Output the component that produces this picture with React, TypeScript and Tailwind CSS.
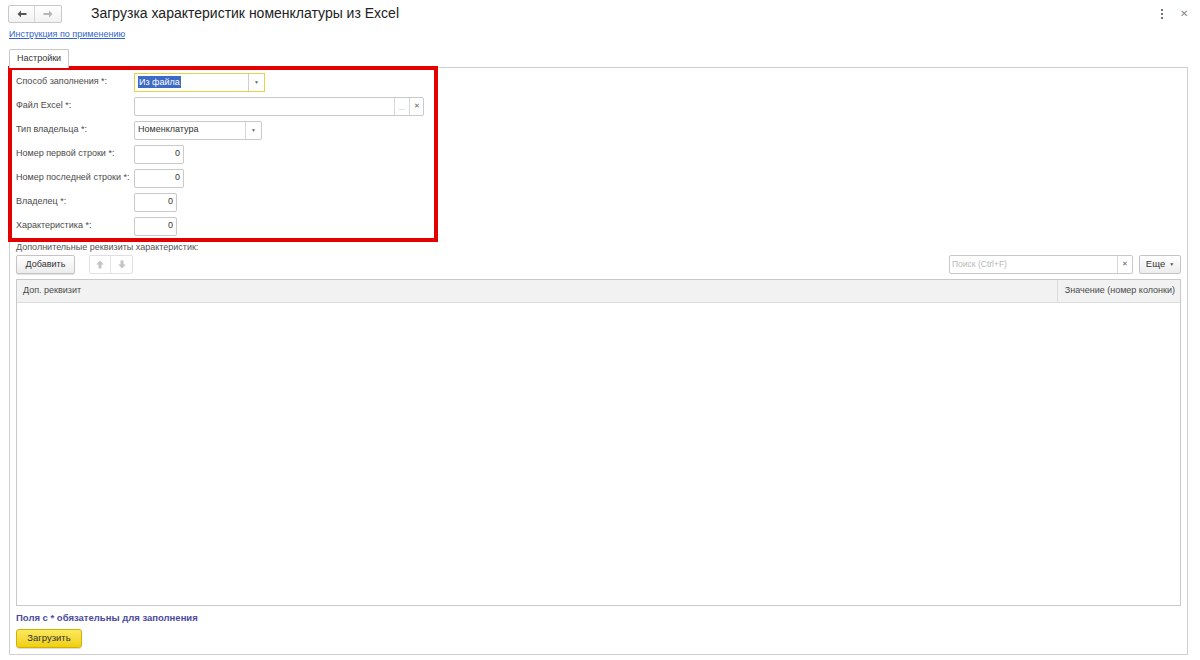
import React from 'react';

const font = { fontFamily: '"Liberation Sans", Arial, sans-serif' };

function NumField({ w }: { w: string }) {
  return (
    <div className={`${w} h-[19px] border border-[#c9c9c9] rounded-[2px] bg-white flex items-center justify-end pr-[3px] text-[9px] text-[#333]`}>
      0
    </div>
  );
}

function Row({ label, children }: { label: string; children: React.ReactNode }) {
  return (
    <div className="h-6 flex items-center">
      <div className="w-[122px] shrink-0 pl-[4px] text-[9px] text-[#4a4a4a] whitespace-nowrap">{label}</div>
      {children}
    </div>
  );
}

function Caret() {
  return <span className="text-[5px] text-[#666] leading-none">▼</span>;
}

function Arrow({ dir, color }: { dir: 'left' | 'right'; color: string }) {
  return (
    <svg width="10" height="8" viewBox="0 0 10 8" className={dir === 'right' ? 'rotate-180' : ''}>
      <path d="M0.5 4 L4 0.5 L4 3 L9.5 3 L9.5 5 L4 5 L4 7.5 Z" fill={color} />
    </svg>
  );
}

function ThickArrow({ dir }: { dir: 'up' | 'down' }) {
  return (
    <svg width="8" height="9" viewBox="0 0 8 9" className={dir === 'down' ? 'rotate-180' : ''}>
      <path d="M4 0.5 L7.8 4.5 L5.5 4.5 L5.5 8.5 L2.5 8.5 L2.5 4.5 L0.2 4.5 Z" fill="#c4c4c4" />
    </svg>
  );
}

export default function App() {
  return (
    <div className="w-[1200px] h-[660px] bg-white text-[#333] overflow-hidden" style={font}>
      {/* header */}
      <div className="h-[27px] flex items-center pl-[8px] pr-[12px]">
        <div className="flex h-[18px] border border-[#c8c8c8] rounded-[2px] bg-gradient-to-b from-white to-[#f2f2f2]">
          <div className="w-[26px] flex items-center justify-center border-r border-[#d6d6d6]">
            <Arrow dir="left" color="#555" />
          </div>
          <div className="w-[26px] flex items-center justify-center">
            <Arrow dir="right" color="#b5b5b5" />
          </div>
        </div>
        <div className="ml-[29px] text-[14px] text-[#222]">Загрузка характеристик номенклатуры из Excel</div>
        <div className="ml-auto flex items-center gap-[17px]">
          <div className="flex flex-col gap-[2px]">
            <span className="w-[2px] h-[2px] bg-[#777]" />
            <span className="w-[2px] h-[2px] bg-[#777]" />
            <span className="w-[2px] h-[2px] bg-[#777]" />
          </div>
          <span className="text-[10px] leading-none text-[#888]">✕</span>
        </div>
      </div>

      {/* link */}
      <div className="pl-[9px] h-[16px] flex items-center">
        <span className="text-[9px] text-[#3366cc] underline">Инструкция по применению</span>
      </div>

      {/* tab */}
      <div className="pl-[9px] mt-[5px] flex">
        <div className="h-[19px] px-[7px] border border-b-0 border-[#c8c8c8] rounded-t-[2px] bg-white flex items-center text-[9px] text-[#333] relative top-px">
          Настройки
        </div>
      </div>

      {/* panel */}
      <div className="ml-[9px] w-[1179px] h-[588px] border border-[#cfcfcf] flex flex-col">
        <div className="-ml-[2px] -mt-[2px] w-[430px] border-4 border-[#e30000]">
          <Row label="Способ заполнения *:">
            <div className="w-[131px] h-[19px] border border-[#e6d24a] bg-white flex items-stretch">
              <div className="flex-1 flex items-center pl-[3px]">
                <span className="bg-[#3c6ac4] text-white text-[9px] px-px leading-[12px]">Из файла</span>
              </div>
              <div className="w-[16px] border-l border-[#cfcfcf] flex items-center justify-center"><Caret /></div>
            </div>
          </Row>
          <Row label="Файл Excel *:">
            <div className="w-[290px] h-[19px] border border-[#c9c9c9] rounded-[2px] bg-white flex items-stretch">
              <div className="flex-1" />
              <div className="w-[15px] border-l border-[#d6d6d6] flex items-end justify-center pb-[4px] text-[7px] text-[#999] leading-none">...</div>
              <div className="w-[14px] border-l border-[#d6d6d6] flex items-center justify-center text-[7px] text-[#666]">✕</div>
            </div>
          </Row>
          <Row label="Тип владельца *:">
            <div className="w-[128px] h-[19px] border border-[#c9c9c9] rounded-[2px] bg-white flex items-stretch">
              <div className="flex-1 flex items-center pl-[3px] text-[9px] text-[#333]">Номенклатура</div>
              <div className="w-[16px] border-l border-[#d6d6d6] flex items-center justify-center"><Caret /></div>
            </div>
          </Row>
          <Row label="Номер первой строки *:">
            <NumField w="w-[50px]" />
          </Row>
          <Row label="Номер последней строки *:">
            <NumField w="w-[50px]" />
          </Row>
          <Row label="Владелец *:">
            <NumField w="w-[43px]" />
          </Row>
          <Row label="Характеристика *:">
            <NumField w="w-[43px]" />
          </Row>
        </div>

        <div className="px-[6px] flex flex-col flex-1">
          <div className="text-[9px] text-[#555] h-[12px] leading-[12px] -mt-[1px]">Дополнительные реквизиты характеристик:</div>

          {/* toolbar */}
          <div className="mt-[2px] h-[19px] flex items-stretch">
            <div className="w-[59px] border border-[#c4c4c4] rounded-[2px] bg-gradient-to-b from-white to-[#ececec] flex items-center justify-center text-[9px] text-[#333] shadow-[0_1px_1px_rgba(0,0,0,0.12)]">
              Добавить
            </div>
            <div className="ml-[14px] flex border border-[#e0e0e0] rounded-[2px] bg-white">
              <div className="w-[21px] flex items-center justify-center border-r border-[#e6e6e6]"><ThickArrow dir="up" /></div>
              <div className="w-[21px] flex items-center justify-center"><ThickArrow dir="down" /></div>
            </div>
            <div className="ml-auto flex w-[184px] border border-[#c9c9c9] rounded-[2px] bg-white">
              <div className="flex-1 flex items-center pl-[2px] text-[8.5px] text-[#b8b8b8]">Поиск (Ctrl+F)</div>
              <div className="w-[15px] border-l border-[#d6d6d6] flex items-center justify-center text-[7px] text-[#666]">✕</div>
            </div>
            <div className="ml-[6px] w-[42px] border border-[#c4c4c4] rounded-[2px] bg-gradient-to-b from-white to-[#ececec] flex items-center justify-center gap-[4px] text-[9.5px] text-[#333]">
              Еще <span className="text-[5px] text-[#555]">▼</span>
            </div>
          </div>

          {/* table */}
          <div className="mt-[5px] h-[327px] border border-[#c9c9c9] flex flex-col">
            <div className="h-[23px] bg-[#f2f2f2] border-b border-[#dcdcdc] flex text-[9px] text-[#4a4a4a]">
              <div className="flex-1 flex items-center pl-[6px]">Доп. реквизит</div>
              <div className="w-[123px] border-l border-[#dcdcdc] flex items-center justify-end pr-[5px]">Значение (номер колонки)</div>
            </div>
            <div className="flex-1 bg-white" />
          </div>

          <div className="mt-[6px] text-[9.5px] font-bold text-[#4b4b9e] leading-[12px]">Поля с * обязательны для заполнения</div>

          <div className="mt-[5px] w-[66px] h-[19px] border border-[#cfb300] rounded-[3px] bg-gradient-to-b from-[#fbe95a] to-[#f0cf00] flex items-center justify-center text-[9.5px] text-[#333] shadow-[0_1px_1px_rgba(0,0,0,0.15)]">
            Загрузить
          </div>
        </div>
      </div>
    </div>
  );
}
